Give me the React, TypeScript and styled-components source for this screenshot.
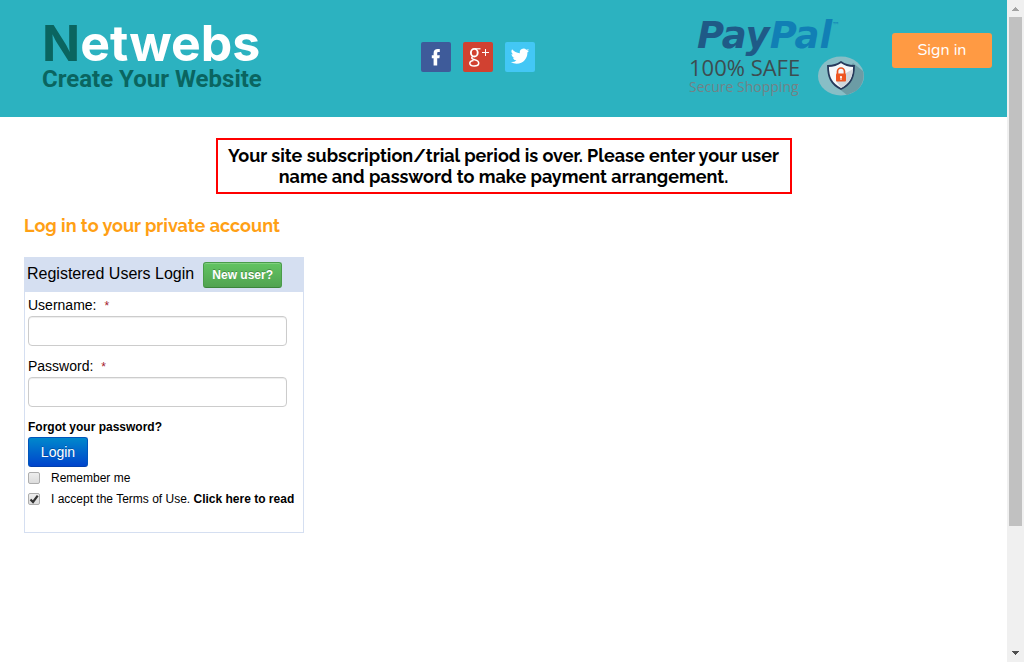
import React from "react";
import styled, { createGlobalStyle, css } from "styled-components";

const Global = createGlobalStyle`
  *, *::before, *::after { box-sizing: border-box; }
  body { margin: 0; background: #fff; color: #000; font-family: "Liberation Sans", Arial, sans-serif; font-size: 14px; }
  a { color: inherit; text-decoration: none; }
`;

const Window = styled.div`
  display: grid;
  grid-template-columns: minmax(0, 1fr) 17px;
  min-height: 100vh;
`;

const Header = styled.header`
  display: grid;
  grid-template-columns: 379fr 268fr 203fr 100px;
  align-items: center;
  min-height: 117px;
  padding: 0 15px 0 42px;
  background: #2cb2c0;
`;

const Logo = styled.a`
  display: block;
  padding-bottom: 8px;
  color: #0a6560;
`;

const LogoName = styled.span`
  display: block;
  font-family: Inter, sans-serif;
  font-size: 50px;
  font-weight: 700;
  line-height: 48px;
  color: #fff;
`;

const LogoInitial = styled.span`
  color: #0a6560;
`;

const LogoTagline = styled.span`
  display: block;
  font-family: Roboto, sans-serif;
  font-size: 24px;
  font-weight: 700;
  line-height: 24px;
`;

const Social = styled.nav`
  display: flex;
  gap: 12px;
  padding-bottom: 4px;
`;

const SocialLink = styled.a<{ $color: string }>`
  width: 30px;
  height: 30px;
  border-radius: 2px;
  background: ${(p) => p.$color};
  svg { display: block; }
`;

const Trust = styled.div`
  display: flex;
  align-items: flex-end;
  gap: 17px;
  padding-bottom: 6px;
  font-family: "Open Sans", sans-serif;
  white-space: nowrap;
`;

const TrustText = styled.div`
  width: 112px;
`;

const PayPal = styled.div`
  padding-left: 8px;
  font-family: "DejaVu Sans", sans-serif;
  font-size: 37px;
  font-style: italic;
  font-weight: 700;
  line-height: 40px;
  color: #1f5a87;
`;

const PayPalEnd = styled.span`
  color: #117fb5;
`;

const Mark = styled.sup`
  font-size: 8px;
  font-style: normal;
  font-weight: 400;
  line-height: 0;
  vertical-align: 20px;
`;

const Safe = styled.div`
  font-size: 22px;
  line-height: 22px;
  color: #3d4c50;
`;

const Secure = styled.div`
  font-size: 14px;
  line-height: 18px;
  color: #738286;
`;

const SignIn = styled.button`
  height: 35px;
  margin-bottom: 16px;
  padding: 0 0 2px;
  border: 0;
  border-radius: 3px;
  background: #ff9a43;
  color: #fff;
  font-family: Nunito, Lato, sans-serif;
  font-size: 16px;
`;

const Main = styled.main`
  padding: 21px 24px 24px;
`;

const raleway = css`
  font-family: Raleway, Lato, sans-serif;
  font-size: 18px;
  font-weight: 700;
`;

const Notice = styled.h2`
  ${raleway}
  max-width: 576px;
  margin: 0 auto;
  padding: 5px 6px;
  border: 2px solid #f00;
  line-height: 21px;
  text-align: center;
`;

const Title = styled.h1`
  ${raleway}
  margin: 20px 0;
  line-height: 23px;
  color: #ffa015;
`;

const Panel = styled.form`
  width: 280px;
  border: 1px solid #d5dff1;
`;

const PanelHead = styled.div`
  display: flex;
  align-items: center;
  gap: 9px;
  height: 34px;
  padding-left: 2px;
  background: #d5dff1;
  font-size: 16px;
`;

const PanelTitle = styled.span`
  padding-bottom: 2px;
`;

const NewUser = styled.button`
  width: 79px;
  height: 26px;
  padding: 0;
  border: 1px solid #4a9c4a;
  border-bottom-color: #3b853b;
  border-radius: 3px;
  background: linear-gradient(#62c462, #51a351);
  box-shadow: inset 0 1px 0 rgba(255, 255, 255, 0.2);
  color: #fff;
  font: 700 12px "Liberation Sans", Arial, sans-serif;
  text-shadow: 0 -1px 0 rgba(0, 0, 0, 0.25);
`;

const PanelBody = styled.div`
  padding: 3px 3px 23px;
`;

const Field = styled.div`
  margin-bottom: 10px;
`;

const FieldLabel = styled.label`
  display: block;
  padding-bottom: 1px;
  line-height: 20px;
`;

const Required = styled.span`
  margin-left: 8px;
  font-size: 12px;
  line-height: 1;
  color: #a3182c;
`;

const TextInput = styled.input`
  display: block;
  width: 259px;
  height: 30px;
  padding: 4px 6px;
  border: 1px solid #ccc;
  border-radius: 4px;
  background: #fff;
  box-shadow: inset 0 1px 1px rgba(0, 0, 0, 0.075);
  font: 14px "Liberation Sans", Arial, sans-serif;
`;

const StrongLink = styled.a`
  font-size: 12px;
  font-weight: 700;
`;

const Forgot = styled.div`
  font-size: 12px;
  line-height: 20px;
`;

const LoginButton = styled.button`
  display: block;
  width: 60px;
  height: 30px;
  padding: 0;
  border: 1px solid #0055bb;
  border-bottom-color: #003fae;
  border-radius: 3px;
  background: linear-gradient(#0088cc, #0044cc);
  color: #fff;
  font: 14px "Liberation Sans", Arial, sans-serif;
  text-shadow: 0 -1px 0 rgba(0, 0, 0, 0.25);
`;

const CheckRow = styled.div`
  display: flex;
  align-items: center;
  gap: 11px;
  height: 21px;
  font-size: 12px;
  white-space: nowrap;
`;

const tick = `url("data:image/svg+xml,%3Csvg xmlns='http://www.w3.org/2000/svg' viewBox='0 0 10 10'%3E%3Cpath d='M1.5 5.5 4 8 8.7 1.6' fill='none' stroke='%23333' stroke-width='2.2'/%3E%3C/svg%3E")`;

const Check = styled.input`
  appearance: none;
  width: 12px;
  height: 12px;
  margin: 0;
  border: 1px solid #adadad;
  border-radius: 2px;
  background: linear-gradient(#eee, #dcdcdc);
  &:checked { background: ${tick} center / 10px 10px no-repeat, linear-gradient(#eee, #dcdcdc); }
`;

const ScrollTrack = styled.div`
  display: flex;
  flex-direction: column;
  align-items: center;
  background: #f0f0f0;
`;

const ScrollThumb = styled.div`
  flex: 510;
  width: 13px;
  background: #c1c1c1;
`;

const ScrollRest = styled.div`
  flex: 119;
`;

function Arrow({ down = false }: { down?: boolean }) {
  return (
    <svg width="17" height="17" viewBox="0 0 17 17" shapeRendering="crispEdges" aria-hidden="true">
      <path d={down ? "M5 6h7v1h-1v1h-1v1H9v1H8V9H7V8H6V7H5z" : "M5 11h7v-1h-1V9h-1V8H9V7H8v1H7v1H6v1H5z"} fill={down ? "#505050" : "#a3a3a3"} />
    </svg>
  );
}

function Shield() {
  return (
    <svg width="46" height="40" viewBox="0 0 46 40" aria-hidden="true">
      <ellipse cx="23" cy="20" rx="23" ry="19.5" fill="#88bec6" />
      <path d="M35 7 45 15c2 7-1 15-7 20l-9 4-9-7z" fill="#6c9ca5" />
      <path d="M23 6c4 3 8 4 13 4 0 11-3 18-13 23C13 28 10 21 10 10c5 0 9-1 13-4z" fill="#f5f8fa" stroke="#263a5b" strokeWidth="1.8" />
      <path d="m28 17 7-4c-1 9-4 15-12 19l-5-7z" fill="#d1d7dc" />
      <path d="M19.5 18v-2.5a3.5 3.5 0 0 1 7 0V18" fill="none" stroke="#e95420" strokeWidth="1.7" />
      <rect x="18" y="17.5" width="10" height="8" rx="1" fill="#ee5521" />
      <circle cx="23" cy="21" r="1.1" fill="#fff" />
      <path d="M22.5 21h1v3h-1z" fill="#fff" />
    </svg>
  );
}

export default function App() {
  return (
    <>
      <Global />
      <Window>
        <div>
          <Header>
            <Logo href="#">
              <LogoName><LogoInitial>N</LogoInitial>etwebs</LogoName>
              <LogoTagline>Create Your Website</LogoTagline>
            </Logo>
            <Social>
              <SocialLink $color="#3e5b9a" href="#" aria-label="Facebook">
                <svg width="30" height="30" viewBox="0 0 30 30">
                  <path d="M12.600 23.500v-7.300h-1.800v-3h1.800v-1.900c0-3 1.500-4.300 4.200-4.300h2v3h-1.300c-1 0-1.300.4-1.300 1.300v1.900h2.600l-.4 3h-2.200v7.300z" fill="#fff" />
                </svg>
              </SocialLink>
              <SocialLink $color="#d14131" href="#" aria-label="Google Plus">
                <svg width="30" height="30" viewBox="0 0 30 30" fill="none" stroke="#fff">
                  <ellipse cx="11.300" cy="10.700" rx="3.400" ry="3.800" strokeWidth="1.900" />
                  <path d="M12 6.800h5.500" strokeWidth="1.200" />
                  <path d="M10 14.200c-2.500 1.800-1 3 1.700 3.600 5.600 1.300 5.300 6.200-.5 6.200-5.400 0-6-4.600-.7-5.400" strokeWidth="1.500" />
                  <path d="M22.500 7v7M19 10.500h7" strokeWidth="1" />
                </svg>
              </SocialLink>
              <SocialLink $color="#43c7f5" href="#" aria-label="Twitter">
                <svg width="30" height="30" viewBox="0 0 30 30">
                  <g transform="translate(5.800 4.900) scale(.77)">
                    <path d="M23.950 4.570a10 10 0 0 1-2.820.770 4.960 4.960 0 0 0 2.160-2.720c-.950.550-2 .950-3.130 1.180a4.920 4.920 0 0 0-8.380 4.480C7.690 8.090 4.070 6.130 1.640 3.160a4.920 4.920 0 0 0 1.520 6.570 4.900 4.900 0 0 1-2.230-.610v.060c0 2.390 1.700 4.380 3.950 4.830a5 5 0 0 1-2.210.080 4.940 4.940 0 0 0 4.600 3.420A9.870 9.870 0 0 1 0 19.540a13.990 13.990 0 0 0 7.550 2.210c9.050 0 14-7.500 14-13.980 0-.210 0-.420-.020-.630a9.940 9.940 0 0 0 2.420-2.570z" fill="#fff" />
                  </g>
                </svg>
              </SocialLink>
            </Social>
            <Trust>
              <TrustText>
                <PayPal>Pay<PayPalEnd>Pal<Mark>™</Mark></PayPalEnd></PayPal>
                <Safe>100% SAFE</Safe>
                <Secure>Secure Shopping</Secure>
              </TrustText>
              <Shield />
            </Trust>
            <SignIn type="button">Sign in</SignIn>
          </Header>
          <Main>
            <Notice>Your site subscription/trial period is over. Please enter your user name and password to make payment arrangement.</Notice>
            <Title>Log in to your private account</Title>
            <Panel onSubmit={(e) => e.preventDefault()}>
              <PanelHead>
                <PanelTitle>Registered Users Login</PanelTitle>
                <NewUser type="button">New user?</NewUser>
              </PanelHead>
              <PanelBody>
                <Field>
                  <FieldLabel htmlFor="username">Username:<Required>*</Required></FieldLabel>
                  <TextInput id="username" type="text" />
                </Field>
                <Field>
                  <FieldLabel htmlFor="password">Password:<Required>*</Required></FieldLabel>
                  <TextInput id="password" type="password" />
                </Field>
                <Forgot>
                  <StrongLink href="#">Forgot your password?</StrongLink>
                </Forgot>
                <LoginButton type="submit">Login</LoginButton>
                <CheckRow>
                  <Check id="remember" type="checkbox" />
                  <label htmlFor="remember">Remember me</label>
                </CheckRow>
                <CheckRow>
                  <Check id="terms" type="checkbox" defaultChecked />
                  <span><label htmlFor="terms">I accept the Terms of Use.</label> <StrongLink href="#">Click here to read</StrongLink></span>
                </CheckRow>
              </PanelBody>
            </Panel>
          </Main>
        </div>
        <ScrollTrack>
          <Arrow />
          <ScrollThumb />
          <ScrollRest />
          <Arrow down />
        </ScrollTrack>
      </Window>
    </>
  );
}
